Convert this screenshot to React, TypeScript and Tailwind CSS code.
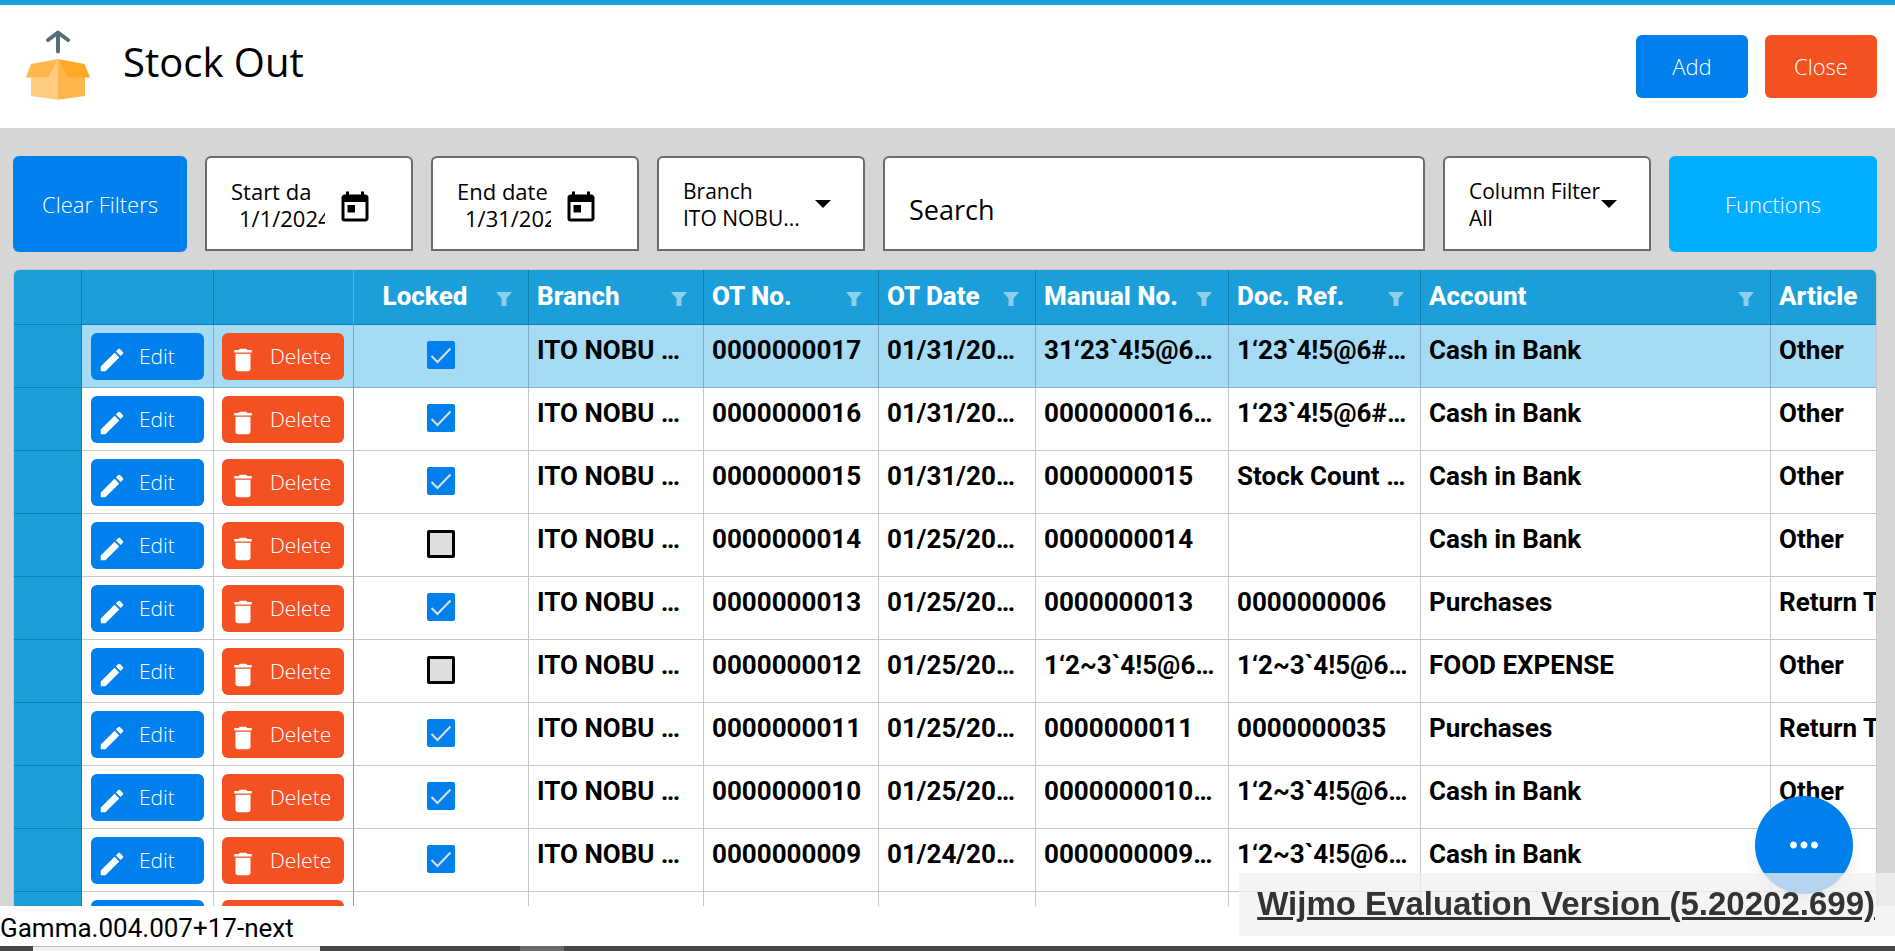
import { useState } from "react";
import clsx from "clsx";
import { MdDelete, MdEdit, MdMoreHoriz, MdToday } from "react-icons/md";

type StockOut = {
	locked: boolean;
	otNo: string;
	otDate: string;
	manualNo: string;
	docRef: string;
	account: string;
	article: string;
};

const ROWS: StockOut[] = [
	{ locked: true, otNo: "0000000017", otDate: "01/31/2024", manualNo: "31‘23`4!5@6#7$8%", docRef: "1‘23`4!5@6#7$8%9", account: "Cash in Bank", article: "Other" },
	{ locked: true, otNo: "0000000016", otDate: "01/31/2024", manualNo: "0000000016-01", docRef: "1‘23`4!5@6#7$8%9", account: "Cash in Bank", article: "Other" },
	{ locked: true, otNo: "0000000015", otDate: "01/31/2024", manualNo: "0000000015", docRef: "Stock Count 2024", account: "Cash in Bank", article: "Other" },
	{ locked: false, otNo: "0000000014", otDate: "01/25/2024", manualNo: "0000000014", docRef: "", account: "Cash in Bank", article: "Other" },
	{ locked: true, otNo: "0000000013", otDate: "01/25/2024", manualNo: "0000000013", docRef: "0000000006", account: "Purchases", article: "Return To" },
	{ locked: false, otNo: "0000000012", otDate: "01/25/2024", manualNo: "1‘2~3`4!5@6#7$8%", docRef: "1‘2~3`4!5@6#7$8%", account: "FOOD EXPENSE", article: "Other" },
	{ locked: true, otNo: "0000000011", otDate: "01/25/2024", manualNo: "0000000011", docRef: "0000000035", account: "Purchases", article: "Return To" },
	{ locked: true, otNo: "0000000010", otDate: "01/25/2024", manualNo: "0000000010-01", docRef: "1‘2~3`4!5@6#7$8%", account: "Cash in Bank", article: "Other" },
	{ locked: true, otNo: "0000000009", otDate: "01/24/2024", manualNo: "0000000009-01", docRef: "1‘2~3`4!5@6#7$8%", account: "Cash in Bank", article: "Other" },
	{ locked: true, otNo: "0000000008", otDate: "01/24/2024", manualNo: "1‘2~3`4!5@6#7$8%", docRef: "", account: "Cash in Bank", article: "Other" },
];

const HEADERS = ["Branch", "OT No.", "OT Date", "Manual No.", "Doc. Ref.", "Account", "Article"];

export default function App() {
	return (
		<div className="flex h-screen flex-col overflow-hidden bg-white font-['Open_Sans',sans-serif] text-black">
			<header className="flex shrink-0 items-start justify-between border-t-5 border-[#1a9fda] pt-[25px] pr-[18px] pb-7 pl-[26px]">
				<div className="flex gap-8">
					<StockOutIcon />
					<h1 className="pt-1.5 text-[40px] leading-[52px]">Stock Out</h1>
				</div>
				<div className="flex gap-[17px] pt-[5px]">
					<button type="button" className="h-[63px] w-28 rounded-md bg-[#0080ec] text-[22px] font-light text-white">Add</button>
					<button type="button" className="h-[63px] w-28 rounded-md bg-[#f45123] text-[22px] font-light text-white">Close</button>
				</div>
			</header>

			<main className="flex min-h-0 flex-1 flex-col gap-[17px] bg-[#d6d6d6] pt-7 pr-[18px] pl-[13px]">
				<Toolbar />
				<StockOutGrid />
			</main>

			<footer className="h-10 shrink-0 bg-white font-[Roboto,sans-serif] text-[26px] leading-[44px]">Gamma.004.007+17-next</footer>
			<div className="flex h-[5px] shrink-0 bg-[#464646] pl-[33px]">
				<div className="w-[287px] border-t border-[#bbbbbb] bg-[#f1f1f1]" />
				<div className="ml-50 w-11 bg-[#6b6b6b]" />
			</div>

			<button
				type="button"
				aria-label="More actions"
				className="fixed right-[42px] bottom-[57px] flex size-[98px] items-center justify-center rounded-full bg-[#0080ec] text-white shadow-lg"
			>
				<MdMoreHoriz size={42} />
			</button>
			<a
				href="#wijmo"
				className="fixed right-0 bottom-[15px] flex h-[63px] items-center bg-[#f0f0f0]/75 pr-5 pb-0.5 pl-[18px] font-['Liberation_Sans',sans-serif] text-[33px] font-bold text-[#333333] underline"
			>
				Wijmo Evaluation Version (5.20202.699)
			</a>
		</div>
	);
}

function Toolbar() {
	return (
		<div className="flex shrink-0 gap-[18px]">
			<button type="button" className="h-24 w-[174px] shrink-0 rounded-md bg-[#0080ec] text-[22px] font-light text-white">Clear Filters</button>
			<DateField id="start-date" label="Start da" value="1/1/2024" />
			<DateField id="end-date" label="End date" value="1/31/2024" />
			<SelectField id="branch" label="Branch" value="ITO NOBU..." />
			<input
				type="text"
				aria-label="Search"
				placeholder="Search"
				className="h-[95px] min-w-0 flex-1 rounded-t-md border-2 border-[#6b6b6b] bg-white px-6 pt-3 text-[27px] outline-none placeholder:text-black"
			/>
			<SelectField id="column-filter" label="Column Filter" value="All" />
			<button type="button" className="h-24 w-52 shrink-0 rounded-md bg-[#00aeff] text-[22px] font-light text-white">Functions</button>
		</div>
	);
}

function DateField({ id, label, value }: { id: string; label: string; value: string }) {
	const [date, setDate] = useState(value);

	return (
		<div className="flex h-[95px] w-52 shrink-0 gap-3 rounded-t-md border-2 border-[#6b6b6b] bg-white pt-5 pl-6">
			<div className="flex w-[94px] flex-col">
				<label htmlFor={id} className="text-[22px] leading-[27px] whitespace-nowrap">{label}</label>
				<input
					id={id}
					type="text"
					value={date}
					onChange={(event) => setDate(event.target.value)}
					className="w-full pl-2 text-[22px] leading-[27px] outline-none"
				/>
			</div>
			<button type="button" aria-label="Open calendar" className="mt-3 size-9">
				<MdToday size={36} />
			</button>
		</div>
	);
}

function SelectField({ id, label, value }: { id: string; label: string; value: string }) {
	return (
		<div className="flex h-[95px] w-52 shrink-0 rounded-t-md border-2 border-[#6b6b6b] bg-white pt-5 pl-6">
			<div className="flex w-[132px] flex-col">
				<label htmlFor={id} className="text-[21px] leading-[27px] whitespace-nowrap">{label}</label>
				<select id={id} className="w-full appearance-none text-[21px] leading-[27px] outline-none">
					<option>{value}</option>
				</select>
			</div>
			<svg width="16" height="8" viewBox="0 0 16 8" className="mt-[22px]">
				<path d="M0 0h16L8 8z" />
			</svg>
		</div>
	);
}

function StockOutGrid() {
	const [selected, setSelected] = useState(0);

	return (
		<div className="min-h-0 flex-1 overflow-hidden rounded-t-md border-x border-t border-[#c8c8c8] bg-white">
			<table className="w-[2060px] table-fixed border-separate border-spacing-0 font-[Roboto,sans-serif] text-[26px]">
				<colgroup>
					<col className="w-[68px]" />
					<col className="w-[132px]" />
					<col className="w-[140px]" />
					<col className="w-[175px]" />
					<col className="w-[175px]" />
					<col className="w-[175px]" />
					<col className="w-[157px]" />
					<col className="w-[193px]" />
					<col className="w-[192px]" />
					<col className="w-[350px]" />
					<col />
				</colgroup>
				<thead>
					<tr className="h-[55px] bg-[#1a9fda] text-white">
						<th aria-label="Row" className="border-r border-b border-[#137fb1]" />
						<th aria-label="Edit" className="border-r border-b border-[#137fb1]" />
						<th aria-label="Delete" className="border-r border-b border-r-[#9b9b9b] border-b-[#137fb1]" />
						<HeaderCell label="Locked" centered />
						{HEADERS.map((label) => (
							<HeaderCell key={label} label={label} />
						))}
					</tr>
				</thead>
				<tbody>
					{ROWS.map((row, index) => (
						<GridRow key={row.otNo} row={row} selected={index === selected} onSelect={() => setSelected(index)} />
					))}
				</tbody>
			</table>
		</div>
	);
}

function HeaderCell({ label, centered }: { label: string; centered?: boolean }) {
	return (
		<th scope="col" className="border-r border-b border-[#137fb1] p-0 pr-4 pl-2">
			<div className="flex items-center">
				<span className={clsx("flex-1 pb-0.5 leading-8 font-extrabold whitespace-nowrap", centered ? "pr-2 text-center" : "text-left")}>{label}</span>
				<svg width="16" height="14" viewBox="0 0 16 14" className="mt-1 shrink-0 fill-white/50">
					<path d="M0 0h16l-5.500 6.500V14h-5V6.500z" />
				</svg>
			</div>
		</th>
	);
}

function GridRow({ row, selected, onSelect }: { row: StockOut; selected: boolean; onSelect: () => void }) {
	const line = selected ? "border-[#7fafc6]" : "border-[#c8c8c8]";
	const bottomLine = selected ? "border-b-[#7fafc6]" : "border-b-[#c8c8c8]";
	const values = ["ITO NOBU SUPPLY", row.otNo, row.otDate, row.manualNo, row.docRef, row.account, row.article];

	return (
		<tr onClick={onSelect} className={clsx("h-[63px]", selected ? "bg-[#a5dbf5]" : "bg-white")}>
			<td className="border-r border-b border-[#137fb1] bg-[#1a9fda]" />
			<td className={clsx("border-r border-b p-0 pl-[9px] align-top", line)}>
				<RowButton label="Edit" />
			</td>
			<td className={clsx("border-r border-b border-r-[#9b9b9b] p-0 pl-2 align-top", bottomLine)}>
				<RowButton label="Delete" />
			</td>
			<td className={clsx("border-r border-b p-0 pt-4 align-top", line)}>
				<LockedBox checked={row.locked} label={`Locked ${row.otNo}`} />
			</td>
			{values.map((value, index) => (
				<td key={index} className={clsx("truncate border-r border-b p-0 pt-[9px] pr-3 pl-2 align-top leading-8 font-bold", line)}>{value}</td>
			))}
		</tr>
	);
}

function RowButton({ label }: { label: "Edit" | "Delete" }) {
	const Icon = label === "Edit" ? MdEdit : MdDelete;

	return (
		<button
			type="button"
			className={clsx(
				"mt-2 flex h-[47px] items-center gap-3 rounded-md pl-1.5 font-['Open_Sans',sans-serif] text-[21px] font-light text-white",
				label === "Edit" ? "w-[113px] bg-[#0080ec]" : "w-[122px] bg-[#f45123]",
			)}
		>
			<Icon size={30} className="mt-1.5 shrink-0" />
			{label}
		</button>
	);
}

function LockedBox({ checked, label }: { checked: boolean; label: string }) {
	return (
		<span className="relative mx-auto block size-7">
			<input
				type="checkbox"
				aria-label={label}
				checked={checked}
				readOnly
				className="block size-7 appearance-none rounded-xs border-3 border-black bg-[#dedede] checked:border-0 checked:bg-[#0080ec]"
			/>
			{checked ? (
				<svg width="28" height="28" viewBox="0 0 28 28" className="pointer-events-none absolute inset-0 fill-none stroke-[#dedede] stroke-2">
					<path d="M4.500 15l6 6L23.500 7.500" />
				</svg>
			) : null}
		</span>
	);
}

function StockOutIcon() {
	return (
		<svg width="65" height="70" viewBox="26 30 65 70">
			<path d="M58 33v18.500M48 40l10-7.500L68 40" fill="none" stroke="#546e7a" strokeWidth="4" strokeLinecap="round" strokeLinejoin="round" />
			<path d="M31 70l27-10v39.700L31 96z" fill="#ffcc80" />
			<path d="M85 70L58 60v39.700L85 96z" fill="#ffb74d" />
			<path d="M31 64l27-5-10 18.500H26z" fill="#ffb74d" />
			<path d="M84.500 64L58 59l10 18.500h22z" fill="#ffa726" />
		</svg>
	);
}
